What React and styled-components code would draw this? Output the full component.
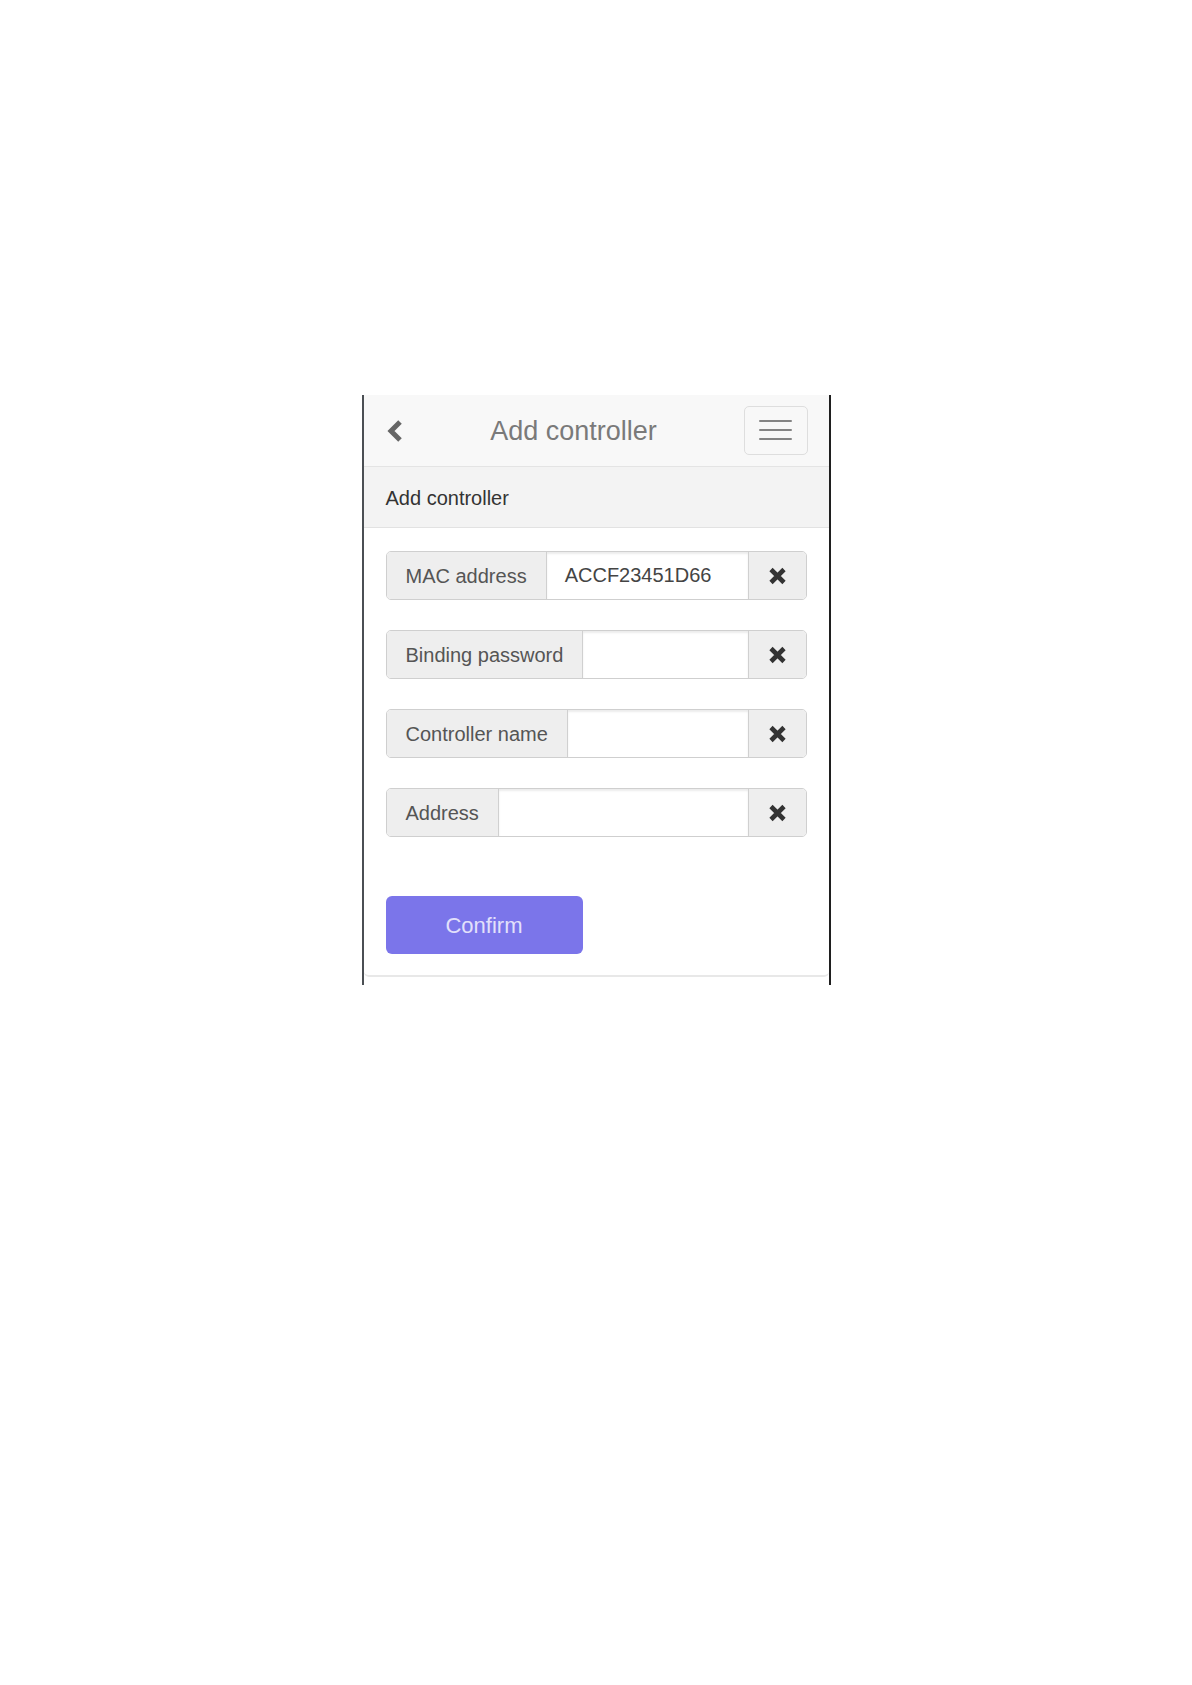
import React from "react";
import styled, { createGlobalStyle } from "styled-components";

const GlobalStyle = createGlobalStyle`
    body {
        margin: 0;
        background: #fff;
        font-family: "Liberation Sans", Arial, sans-serif;
    }
`

const Frame = styled.div`
    width: 465px;
    margin: 395px auto 0;
    border-left: 2px solid #4b4f54;
    border-right: 2px solid #1f1f1f;
    background: #fff;
    padding-bottom: 8px;
`

const Header = styled.div`
    height: 71px;
    display: flex;
    align-items: center;
    padding: 0 21px 0 22px;
    background: #f8f8f8;
    border-bottom: 1px solid #e4e4e4;
`

const BackButton = styled.div`
    width: 18px;
    height: 26px;
    display: flex;
`

const Title = styled.div`
    flex: 1;
    text-align: center;
    font-size: 27px;
    color: #7a7a7a;
    padding-top: 1px;
`

const MenuButton = styled.div`
    width: 62px;
    height: 47px;
    border: 1px solid #dedede;
    border-radius: 5px;
    display: flex;
    flex-direction: column;
    align-items: center;
    justify-content: center;
    gap: 7px;
    margin-top: -1px;
`

const MenuLine = styled.span`
    display: block;
    width: 33px;
    height: 2px;
    background: #848484;
    border-radius: 1px;
`

const SectionBar = styled.div`
    height: 61px;
    display: flex;
    align-items: center;
    padding: 3px 22px 0;
    box-sizing: border-box;
    background: #f3f3f3;
    border-bottom: 1px solid #e2e2e2;
    font-size: 20px;
    color: #333;
`

const Body = styled.div`
    padding: 23px 22px 21px;
    border-bottom: 2px solid #e8e8e8;
    border-radius: 0 0 5px 5px;
    display: flex;
    flex-direction: column;
`

const Fields = styled.div`
    display: flex;
    flex-direction: column;
    gap: 30px;
`

const Row = styled.div`
    display: flex;
    height: 49px;
    border: 1px solid #cfcfcf;
    border-radius: 5px;
    overflow: hidden;
    box-sizing: border-box;
`

const Label = styled.div`
    display: flex;
    align-items: center;
    padding: 2px 19px 0;
    background: #eeeeee;
    border-right: 1px solid #d0d0d0;
    font-size: 20px;
    color: #555;
    white-space: nowrap;
`

const Input = styled.div`
    flex: 1;
    display: flex;
    align-items: center;
    padding: 0 18px;
    background: #fff;
    box-shadow: inset 0 2px 2px rgba(0, 0, 0, 0.08);
    font-size: 20px;
    color: #444;
`

const ClearButton = styled.div`
    width: 57px;
    display: flex;
    align-items: center;
    justify-content: center;
    background: #eeeeee;
    border-left: 1px solid #d0d0d0;
`

const ConfirmButton = styled.button`
    margin-top: 59px;
    width: 197px;
    height: 58px;
    border: none;
    border-radius: 6px;
    background: #7b75ea;
    color: #e2e0fb;
    font-family: "Liberation Sans", Arial, sans-serif;
    font-size: 22px;
    padding-top: 3px;
    cursor: pointer;
`

const Chevron = () => (
    <svg width="18" height="26" viewBox="0 0 18 26">
        <polyline points="14,4 5,13 14,22" fill="none" stroke="#666" strokeWidth="5" strokeLinejoin="miter" />
    </svg>
)

const Cross = () => (
    <svg width="19" height="18" viewBox="0 0 19 18">
        <path d="M3 2.5 L16 15.5 M16 2.5 L3 15.5" stroke="#333" strokeWidth="4.6" strokeLinecap="butt" />
    </svg>
)

const fields = [
    { label: "MAC address", value: "ACCF23451D66" },
    { label: "Binding password", value: "" },
    { label: "Controller name", value: "" },
    { label: "Address", value: "" },
]

const App = () => {
    return (
        <>
            <GlobalStyle />
            <Frame>
                <Header>
                    <BackButton><Chevron /></BackButton>
                    <Title>Add controller</Title>
                    <MenuButton>
                        <MenuLine />
                        <MenuLine />
                        <MenuLine />
                    </MenuButton>
                </Header>
                <SectionBar>Add controller</SectionBar>
                <Body>
                    <Fields>
                        {fields.map((f) => (
                            <Row key={f.label}>
                                <Label>{f.label}</Label>
                                <Input>{f.value}</Input>
                                <ClearButton><Cross /></ClearButton>
                            </Row>
                        ))}
                    </Fields>
                    <ConfirmButton>Confirm</ConfirmButton>
                </Body>
            </Frame>
        </>
    )
}

export default App
